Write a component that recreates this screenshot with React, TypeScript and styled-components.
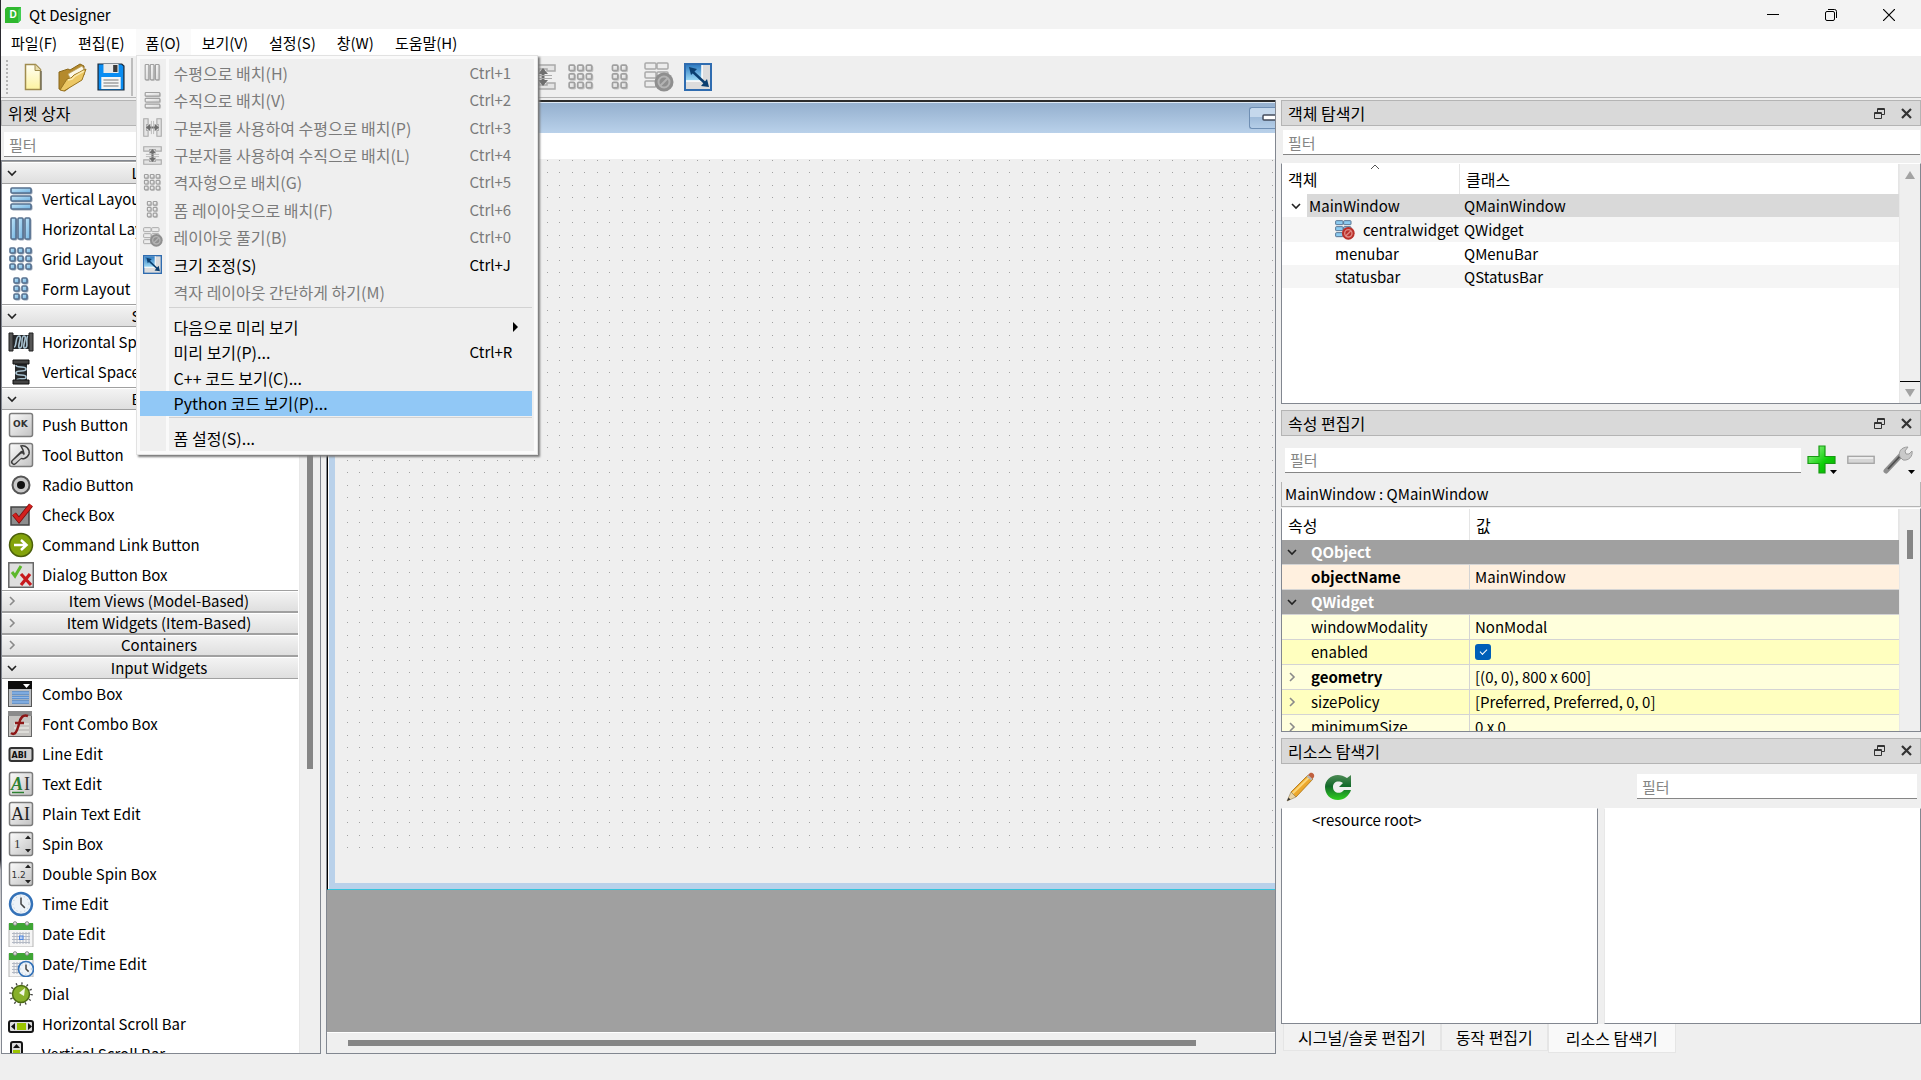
import React, { useState } from "react";
import styled, { createGlobalStyle, css } from "styled-components";
import { Undo2, Redo2, ArrowDown, ArrowUp, MousePointer2, Cable, ListOrdered } from "lucide-react";

const Global = createGlobalStyle`
  *, *::before, *::after { box-sizing: border-box; }
  body { margin: 0; overflow: hidden; }
  body, button, input, table {
    font-family: "Noto Sans CJK KR", "Noto Sans", sans-serif;
    font-size: 15px;
    line-height: 22px;
    color: #000;
  }
`;

const edge = "#828790";

const Window = styled.div`
  height: 100vh;
  display: flex;
  flex-direction: column;
  padding-left: 1px;
  background: linear-gradient(#2a2a30 0 860px, #b8b8bc 870px, #efefef 960px);
`;

/* ---------- title bar ---------- */

const TitleBar = styled.header`
  flex: none;
  height: 29px;
  display: flex;
  align-items: center;
  padding: 0 3px 0 4px;
  background: #f3f3f3;
`;
const Title = styled.h1`
  flex: 1;
  margin: 0 0 0 8px;
  font-size: 15px;
  font-weight: 400;
`;
const CaptionButton = styled.button`
  width: 58px;
  height: 29px;
  padding: 0;
  border: 0;
  background: none;
  display: grid;
  place-items: center;
`;

/* ---------- menu bar ---------- */

const MenuBar = styled.nav`
  flex: none;
  height: 27px;
  display: flex;
  gap: 1px;
  background: #fff;
`;
const MenuSlot = styled.div`
  position: relative;
`;
const MenuTitle = styled.button<{ $open?: boolean }>`
  height: 27px;
  padding: 0 10px;
  border: 0;
  background: ${(p) => (p.$open ? "#fafafa" : "transparent")};
`;
const Popup = styled.div`
  position: absolute;
  z-index: 5;
  top: 26px;
  left: 0;
  width: 402px;
  padding: 3px;
  border: 1px solid #e2e2e2;
  background: linear-gradient(90deg, #efefef 26px, #fafafa 26px 29px, #efefef 29px) content-box, #fafafa;
  box-shadow: 2px 2px 2px #7a7a7a;
`;
const MenuGroup = styled.div<{ $height: number }>`
  height: ${(p) => p.$height}px;
  display: grid;
  grid-auto-rows: 1fr;
`;
const MenuItem = styled.button<{ $active?: boolean }>`
  display: grid;
  grid-template-columns: 26px 1fr 62px;
  column-gap: 8px;
  align-items: center;
  margin-right: 2px;
  padding: 0;
  border: 0;
  text-align: left;
  white-space: nowrap;
  background: ${(p) => (p.$active ? "#91c8f6" : "transparent")};
  &:disabled { color: #7b7b7b; }
`;
const MenuLabel = styled.span`
  font-size: 16px;
`;
const IconCell = styled.span`
  display: grid;
  place-items: center;
`;
const SubArrow = styled.span`
  justify-self: end;
  margin-right: 14px;
  border: 5px solid transparent;
  border-left-color: #000;
  border-right-width: 0;
`;
const MenuRule = styled.hr`
  height: 1px;
  margin: 1px 2px 6px 29px;
  border: 0;
  background: #d2d2d2;
`;

/* ---------- tool bar ---------- */

const ToolBar = styled.div`
  flex: none;
  height: 42px;
  display: flex;
  align-items: center;
  padding: 0 0 4px 5px;
  background: #efefef;
  border-bottom: 1px solid #b4b4b4;
`;
const Grip = styled.span`
  width: 2px;
  height: 34px;
  margin: 4px 5px 0 0;
  background: repeating-linear-gradient(#b5b5b5 0 2px, transparent 2px 4px);
`;
const Divider = styled.span`
  width: 2px;
  height: 38px;
  margin: 4px 4px 0 1px;
  background: #bdbdbd;
`;
const ToolButton = styled.button<{ $wide?: boolean }>`
  width: ${(p) => (p.$wide ? 39 : 38)}px;
  height: 34px;
  margin-top: 4px;
  padding: 0;
  border: 0;
  background: none;
  color: #9a9a9a;
  display: grid;
  place-items: center;
`;

/* ---------- work area ---------- */

const Work = styled.main`
  flex: 1;
  min-height: 0;
  display: grid;
  grid-template-columns: 320px minmax(0, 1fr) 640px;
  column-gap: 5px;
  padding-top: 2px;
  background: #efefef;
`;
const StatusBar = styled.footer`
  flex: none;
  height: 26px;
  background: #efefef;
`;

const Dock = styled.section`
  min-width: 0;
  min-height: 0;
  display: flex;
  flex-direction: column;
`;
const DockHead = styled.div`
  flex: none;
  height: 26px;
  display: flex;
  align-items: center;
  gap: 14px;
  padding: 0 7px 0 6px;
  border: 1px solid #b4b4b4;
  background: #d9d9d9;
`;
const DockTitle = styled.h2`
  flex: 1;
  margin: 0;
  font-size: 16px;
  font-weight: 400;
`;
const SmallButton = styled.button`
  width: 13px;
  height: 13px;
  padding: 0;
  border: 0;
  background: none;
  display: grid;
`;
const Filter = styled.input`
  flex: none;
  height: 25px;
  min-width: 0;
  padding: 0 5px;
  border: 0;
  border-bottom: 1px solid #868686;
  border-radius: 0;
  background: #fff;
  outline: 0;
  &::placeholder { color: #858585; opacity: 1; }
`;

/* ---------- widget box ---------- */

const BoxFilter = styled(Filter)`
  margin: 6px 3px 3px;
`;
const Frame = styled.div`
  flex: 1;
  min-height: 0;
  display: flex;
  border: 1px solid ${edge};
  background: #fff;
`;
const WidgetList = styled.div`
  flex: 1;
  min-width: 0;
  overflow: hidden;
`;
const Category = styled.button<{ $open?: boolean }>`
  width: calc(100% - 1px);
  height: ${(p) => (p.$open ? 23 : 22)}px;
  display: flex;
  align-items: center;
  padding: 0;
  border: 0;
  border-top: 1px solid #a0a0a0;
  border-bottom: 1px solid #a0a0a0;
  box-shadow: inset 0 1px #fff;
  background: linear-gradient(#f4f4f4, #dfdfdf);
`;
const CategoryName = styled.span`
  flex: 1;
  padding-left: 3px;
`;
const Entries = styled.ul`
  margin: 0;
  padding: 0;
  list-style: none;
`;
const Entry = styled.li`
  height: 30px;
  display: flex;
  align-items: center;
  gap: 8px;
  padding-left: 6px;
  white-space: nowrap;
`;
const Track = styled.div`
  flex: none;
  width: 21px;
  background: #efefef;
  border-left: 1px solid #e8e8e8;
  display: flex;
  flex-direction: column;
  align-items: center;
`;
const Thumb = styled.span<{ $from: number; $to: number }>`
  width: 6px;
  margin-top: ${(p) => p.$from}px;
  height: ${(p) => p.$to - p.$from}px;
  background: #868686;
`;
const ArrowGlyph = styled.span<{ $down?: boolean }>`
  margin-top: 7px;
  border: 5px solid transparent;
  ${(p) =>
    p.$down
      ? css`border-bottom: 0; border-top: 8px solid #a3a3a3;`
      : css`border-top: 0; border-bottom: 8px solid #a3a3a3;`}
`;
const TrackEnd = styled.span`
  width: 100%;
  height: 22px;
  margin-top: auto;
  border-top: 1px solid #000;
  display: flex;
  justify-content: center;
  align-items: flex-start;
`;

/* ---------- form canvas ---------- */

const Mdi = styled.section`
  min-width: 0;
  display: flex;
  flex-direction: column;
  border: 1px solid ${edge};
  border-top: 0;
  background: #a0a0a0;
`;
const FormWindow = styled.div`
  flex: 1;
  min-height: 0;
  margin-bottom: 142px;
  display: flex;
  flex-direction: column;
  border-top: 2px solid #2c2c2c;
  border-left: 1px solid #000;
  border-bottom: 1px solid #35c4dc;
`;
const FormTitle = styled.div`
  flex: none;
  height: 31px;
  display: flex;
  justify-content: flex-end;
  align-items: center;
  border-left: 1px solid #fff;
  border-top: 1px solid #dfeaf5;
  background: linear-gradient(#98b3d1 10%, #b9d1ea);
  overflow: hidden;
`;
const FormMinimize = styled.button`
  width: 26px;
  height: 22px;
  padding: 0;
  border: 1px solid #6f8fb4;
  border-right: 0;
  border-radius: 3px 0 0 3px;
  background: linear-gradient(#c5d8ec 45%, #9fbbd9 45%, #b4cde7);
  display: flex;
  justify-content: flex-end;
  align-items: center;
`;
const FormBody = styled.div`
  flex: 1;
  min-height: 0;
  display: flex;
  flex-direction: column;
  padding-bottom: 34px;
  border: solid #b9d1ea;
  border-width: 0 0 6px 6px;
  box-shadow: -1px 0 #fff;
  margin-left: 1px;
  background: #efefef;
`;
const FormMenu = styled.div`
  flex: none;
  height: 26px;
  background: #fff;
`;
const DotGrid = styled.svg`
  flex: 1;
  width: 100%;
  min-height: 0;
  display: block;
`;
const HScroll = styled.div`
  flex: none;
  height: 21px;
  padding: 7px 79px 0 21px;
  border-top: 1px solid #fff;
  background: #efefef;
`;
const HThumb = styled.div`
  height: 6px;
  background: #868686;
`;

/* ---------- right column ---------- */

const RightColumn = styled.div`
  min-height: 0;
  display: grid;
  grid-template-rows: 304fr 321fr 316fr;
  row-gap: 6px;
`;
const TreeFilter = styled(Filter)`
  margin: 4px 1px 8px 2px;
`;
const TableFrame = styled.div`
  flex: 1;
  min-height: 0;
  display: flex;
  overflow: hidden;
  border: 1px solid ${edge};
  border-top-color: #fff;
  background: #fff;
`;
const TableClip = styled.div`
  flex: 1;
  min-width: 0;
  overflow: hidden;
`;
const Table = styled.table`
  width: 100%;
  table-layout: fixed;
  border-spacing: 0;
  white-space: nowrap;
  th, td {
    padding: 0;
    text-align: left;
    font-weight: 400;
    line-height: 22px;
  }
`;
const Col = styled.col<{ $width: number }>`
  width: ${(p) => p.$width}px;
`;
const HeadRow = styled.tr<{ $tall?: boolean }>`
  height: ${(p) => (p.$tall ? 31 : 30)}px;
  th {
    padding-left: 6px;
    border-right: 1px solid #e5e5e5;
    font-size: 16px;
  }
`;
const HeadLabel = styled.div`
  position: relative;
`;
const SortMark = styled.svg`
  position: absolute;
  top: -4px;
  left: 48%;
`;
const TreeRow = styled.tr<{ $alt?: boolean; $selected?: boolean; $tall?: boolean }>`
  height: ${(p) => (p.$tall ? 25 : 23)}px;
  background: ${(p) => (p.$selected ? "linear-gradient(90deg, #fff 25px, #d9d9d9 25px)" : p.$alt ? "#f5f5f5" : "#fff")};
  td { padding-left: 4px; }
`;
const NameCell = styled.div<{ $indent: number }>`
  height: 22px;
  display: flex;
  align-items: center;
  gap: 8px;
  padding-left: ${(p) => p.$indent}px;
`;
const GroupRow = styled.tr`
  height: 25px;
  background: #a0a0a0;
  th {
    color: #fff;
    font-weight: 700;
    border-bottom: 1px solid #d4d4d4;
  }
`;
const PropRow = styled.tr<{ $tone: string; $bold?: boolean }>`
  height: 25px;
  background: ${(p) => p.$tone};
  th, td { border-bottom: 1px solid #d4d4d4; }
  th {
    border-right: 1px solid #d4d4d4;
    ${(p) => p.$bold && css`font-weight: 700;`}
  }
  td { padding-left: 5px; }
`;
const PropName = styled.div`
  height: 22px;
  display: grid;
  grid-template-columns: 29px 1fr;
  align-items: center;
`;
const ChevronSlot = styled.span`
  padding-left: 5px;
  display: grid;
`;
const CheckLabel = styled.label`
  display: flex;
`;
const Check = styled.input`
  appearance: none;
  width: 16px;
  height: 16px;
  margin: 0;
  border-radius: 3px;
  background: #005fb8;
  display: grid;
  place-items: center;
  &:checked::after {
    content: "";
    width: 7px;
    height: 4px;
    border: solid #fff;
    border-width: 0 0 1px 1px;
    rotate: -45deg;
    translate: 0 -1px;
  }
`;
const PropTools = styled.div`
  flex: none;
  height: 46px;
  display: flex;
  align-items: center;
  padding: 2px 3px 0 4px;
`;
const PropFilter = styled(Filter)`
  flex: 1;
  margin-right: 3px;
`;
const PropButton = styled.button`
  width: 38px;
  height: 34px;
  padding: 0;
  border: 0;
  background: none;
  display: grid;
  place-items: center;
`;
const ObjectLabel = styled.p`
  flex: none;
  height: 25px;
  margin: 0 0 1px;
  padding: 1px 3px;
  border: 1px solid #b4b4b4;
  border-top: 0;
`;
const ResourceTools = styled.div`
  flex: none;
  height: 44px;
  display: flex;
  align-items: center;
  padding: 2px 4px 0 1px;
`;
const ResourceButton = styled.button`
  width: 37px;
  height: 34px;
  padding: 0;
  border: 0;
  background: none;
  display: grid;
  place-items: center;
`;
const ResourceFilter = styled(Filter)`
  width: 280px;
  margin-left: auto;
`;
const Panes = styled.div`
  flex: 1;
  min-height: 0;
  display: grid;
  grid-template-columns: 317px 1fr;
  column-gap: 6px;
`;
const Pane = styled.div<{ $soft?: boolean }>`
  border: 1px solid ${edge};
  border-top-color: #fff;
  ${(p) => p.$soft && css`border-left-color: #e8e8e8;`}
  background: #fff;
  padding: 0 30px;
`;
const Tabs = styled.div`
  flex: none;
  height: 30px;
  display: flex;
  align-items: flex-start;
  padding-left: 2px;
`;
const Tab = styled.button<{ $current?: boolean }>`
  height: ${(p) => (p.$current ? 29 : 27)}px;
  padding: ${(p) => (p.$current ? "0 17px" : "0 14px")};
  border: 1px solid #e5e5e5;
  border-top: 0;
  background: ${(p) => (p.$current ? "#f9f9f9" : "#f2f2f2")};
  font-size: 16px;
  white-space: nowrap;
`;

/* ---------- drawings ---------- */

const Chevron = ({ open, dim }: { open?: boolean; dim?: boolean }) => (
  <svg width="10" height="10" viewBox="0 0 10 10" fill="none" stroke={dim ? "#8a8a8a" : "#222"} strokeWidth="1.6">
    <path d={open ? "M1 3l4 4 4-4" : "M3 1l4 4-4 4"} />
  </svg>
);

type Tone = { gray?: boolean; size?: number };
const Cells = ({ rects, gray, size = 26 }: Tone & { rects: number[][] }) => (
  <svg width={size} height={size} viewBox="0 0 26 26">
    <defs>
      <linearGradient id={gray ? "cg" : "cb"} x1="0" y1="0" x2="1" y2="1">
        <stop offset="0" stopColor={gray ? "#fafafa" : "#c4e6f9"} />
        <stop offset="1" stopColor={gray ? "#d4d4d4" : "#6fb2e0"} />
      </linearGradient>
    </defs>
    {rects.map(([x, y, w, h], i) => (
      <g key={i}>
        <rect x={x + 1} y={y + 1} width={w} height={h} rx="1" fill={gray ? "#bdbdbd" : "#8b9cb0"} stroke={gray ? "#c8c8c8" : "#9aa6b6"} />
        <rect x={x} y={y} width={w} height={h} rx="1" fill={`url(#${gray ? "cg" : "cb"})`} stroke={gray ? "#a0a0a0" : "#56708f"} strokeWidth="1.6" />
      </g>
    ))}
  </svg>
);
const grid = (xs: number[], ys: number[]) => ys.flatMap((y) => xs.map((x) => [x, y, 5, 5]));
const VBox = (p: Tone) => <Cells {...p} rects={[[3, 2, 20, 5], [3, 10, 20, 5], [3, 18, 20, 5]]} />;
const HBox = (p: Tone) => <Cells {...p} rects={[[3, 2, 5, 21], [10, 2, 5, 21], [17, 2, 5, 21]]} />;
const GridBox = (p: Tone) => <Cells {...p} rects={grid([2, 10, 18], [2, 10, 18])} />;
const FormBox = (p: Tone) => <Cells {...p} rects={grid([6, 14], [2, 10, 18])} />;

const SplitBox = ({ vertical, size = 26 }: { vertical?: boolean; size?: number }) => (
  <svg width={size} height={size} viewBox="0 0 26 26">
    <g transform={vertical ? "rotate(90 13 13)" : undefined}>
      <path d="M1 1h6v8H5v8h2v8H1zM25 1h-6v8h2v8h-2v8h6z" fill="#e4e4e4" stroke="#a9a9a9" strokeWidth="1.5" />
      <path d="M4 13l6-5v3.500h6V8l6 5-6 5v-3.500h-6V18z" fill="#6e6e6e" />
      <path d="M11.500 4v18M14.500 4v18" stroke="#a9a9a9" />
    </g>
  </svg>
);
const BreakBox = ({ red, size = 30 }: { red?: boolean; size?: number }) => (
  <svg width={size} height={size} viewBox="0 0 30 30">
    {[1, 10, 19].map((y) =>
      [1, 13].map((x) => (
        <rect key={`${x}${y}`} x={x} y={y} width="11" height="6" rx="1" fill={red ? "#8ccbf0" : "#ececec"} stroke={red ? "#577492" : "#a9a9a9"} strokeWidth="1.500" />
      ))
    )}
    <circle cx="20" cy="20" r="9.500" fill={red ? "#b9302a" : "#8f8f8f"} />
    <circle cx="20" cy="20" r="5.500" fill="none" stroke={red ? "#e08a85" : "#b3b3b3"} strokeWidth="2" />
    <path d="M16 24l8-8" stroke={red ? "#e08a85" : "#b3b3b3"} strokeWidth="2" />
  </svg>
);
const AdjustIcon = ({ size = 28 }: { size?: number }) => (
  <svg width={size} height={size} viewBox="0 0 28 28">
    <defs>
      <linearGradient id="adj" x1="0" y1="0" x2="0" y2="1">
        <stop offset="0" stopColor="#2f7cc2" />
        <stop offset="1" stopColor="#9fdcf6" />
      </linearGradient>
    </defs>
    <rect x="1" y="1" width="26" height="26" fill="#dcdcdc" stroke="#2f6cb0" strokeWidth="2" />
    <rect x="2" y="2" width="16" height="16" fill="url(#adj)" />
    <path d="M18 2v16H2" fill="none" stroke="#fff" strokeWidth="1.500" />
    <path d="M8 8l14 13" stroke="#0b3f70" strokeWidth="2.500" />
    <path d="M5 4l8 2-6 6zM25 24l-8-1 6-7z" fill="#0b3f70" />
  </svg>
);
const NewIcon = () => (
  <svg width="18" height="28" viewBox="0 0 18 28">
    <defs>
      <linearGradient id="nw" x1="0" y1="0" x2="0" y2="1">
        <stop offset="0" stopColor="#fffef4" />
        <stop offset="1" stopColor="#fdf3a0" />
      </linearGradient>
    </defs>
    <path d="M1.500 1.500h10l5 5v20h-15z" fill="url(#nw)" stroke="#a08c4e" strokeWidth="1.500" />
    <path d="M11 1.500v6h6" fill="#e8dca8" stroke="#a08c4e" />
    <path d="M17 8v19" stroke="#77705a" strokeWidth="1.500" />
  </svg>
);
const OpenIcon = () => (
  <svg width="30" height="30" viewBox="0 0 30 30">
    <path d="M2 10l9-3 2 1 10-6 4 2v9L8 29l-6-2z" fill="#b58a2c" stroke="#8a6718" />
    <path d="M11 12L25 4l2 3-13 11z" fill="#fbf7e6" stroke="#b9a060" strokeWidth=".8" />
    <path d="M3 28l7-11 4-1 3-3L29 7l-4 11L7 29z" fill="#ecc764" stroke="#9a7420" />
    <path d="M11 18l4-1 3-3 9-5" fill="none" stroke="#fbe9ab" strokeWidth="1.500" />
  </svg>
);
const SaveIcon = () => (
  <svg width="28" height="28" viewBox="0 0 26 28" preserveAspectRatio="none">
    <path d="M1 1h22l2 2v24H1z" fill="#0a8df2" stroke="#1d2c3c" strokeWidth="1.200" />
    <path d="M6 1h14v9H6z" fill="#e9e9e9" />
    <path d="M15 2h4v7h-4z" fill="#3a3a3a" />
    <path d="M4 14h18v12H4z" fill="#f6f6f6" />
    <path d="M6 17h14M6 20h14M6 23h14" stroke="#777" strokeWidth="1.200" />
  </svg>
);
const PlusIcon = () => (
  <svg width="34" height="30" viewBox="0 0 34 30">
    <defs>
      <linearGradient id="pl" x1="0" y1="0" x2="1" y2="1">
        <stop offset="0" stopColor="#a5f79a" />
        <stop offset=".6" stopColor="#0ccf06" />
        <stop offset="1" stopColor="#0ba806" />
      </linearGradient>
    </defs>
    <path d="M13 1h6v10.500h10v7H19V28h-6v-9.500H2v-7h11z" fill="url(#pl)" stroke="#179a12" strokeWidth="1.200" />
    <path d="M24 25h7l-3.500 4z" fill="#000" />
  </svg>
);
const MinusIcon = () => (
  <svg width="28" height="10" viewBox="0 0 28 10">
    <rect x=".8" y="1.300" width="26.400" height="7" fill="#d6d6d6" stroke="#a4a4a4" strokeWidth="1.300" />
    <path d="M2 3h24" stroke="#f3f3f3" strokeWidth="1.500" />
  </svg>
);
const WrenchIcon = () => (
  <svg width="32" height="30" viewBox="0 0 32 30">
    <path d="M3 26L19 9" stroke="#8e8e8e" strokeWidth="5" strokeLinecap="round" />
    <path d="M5 24L18 10" stroke="#4e4e4e" strokeWidth="1.800" />
    <path d="M17 12c-2-5 1-10 8-10l-3 4 1 3 3 0 3-3c1 5-3 10-9 9z" fill="#c9c9c9" stroke="#9d9d9d" />
    <path d="M25 25h7l-3.500 4z" fill="#000" />
  </svg>
);
const PencilIcon = () => (
  <svg width="30" height="30" viewBox="0 0 30 30">
    <path d="M5 20L22 3l5 4L10 25z" fill="#eda82c" stroke="#a86f10" strokeWidth=".8" />
    <path d="M6.500 21.500L24 4.500" stroke="#fbd679" strokeWidth="2" />
    <path d="M22 3l2-2c2-1 5 1 4 4l-1.500 2z" fill="#c0603f" />
    <path d="M20.500 4.500L22 3l4.700 4-1.500 1.500z" fill="#b5b5b5" />
    <path d="M5 20L1 29l9-4z" fill="#e9d3a4" stroke="#8e7a50" strokeWidth=".6" />
    <path d="M1 29l1.500-3.500 2 2z" fill="#333" />
  </svg>
);
const ReloadIcon = () => (
  <svg width="28" height="28" viewBox="0 0 28 28">
    <defs>
      <linearGradient id="rl" x1="0" y1="0" x2="0" y2="1">
        <stop offset="0" stopColor="#4d8a55" />
        <stop offset=".45" stopColor="#12692a" />
        <stop offset="1" stopColor="#2fd01f" />
      </linearGradient>
    </defs>
    <path d="M27 2v12H15l4-4c-5-3-10-1-10 4 0 6 7 8 11 3l7 0c-2 6-7 10-13 10C6 27 1 21 1 14 1 4 13-2 23 5z" fill="url(#rl)" />
  </svg>
);
const FloatIcon = () => (
  <svg width="13" height="13" viewBox="0 0 13 13" fill="none" stroke="#333">
    <path d="M4.500 5V1.500h7v6H9M4 2.500h8" />
    <path d="M1.500 5.500h7v6h-7zM1 6.500h8" />
  </svg>
);
const CloseIcon = () => (
  <svg width="13" height="13" viewBox="0 0 13 13">
    <path d="M2 2l9 9M11 2l-9 9" stroke="#333" strokeWidth="2.200" />
  </svg>
);
const AppIcon = () => (
  <svg width="16" height="16" viewBox="0 0 16 16">
    <path d="M2 0h14v13l-3 3H0V2z" fill="#2fb82f" />
    <path d="M16 0v13l-3 3V3z" fill="#41cd52" />
    <text x="4.500" y="11" fontSize="10" fontWeight="700" fill="#fff" fontFamily="Liberation Sans, sans-serif">D</text>
  </svg>
);

const Tile = ({ children }: { children?: React.ReactNode }) => (
  <g>
    <rect x="1.500" y="1.500" width="23" height="23" rx="2" fill="url(#tile)" stroke="#7c7c7c" strokeWidth="1.500" />
    {children}
  </g>
);
const Clock = ({ x = 13, y = 13, r = 11 }) => (
  <g>
    <circle cx={x} cy={y} r={r} fill="#eef3f8" stroke="#3472b8" strokeWidth={r / 4.5} />
    <circle cx={x} cy={y} r={r * 0.72} fill="none" stroke="#b9c6d2" strokeDasharray="1 3" />
    <path d={`M${x} ${y - r * 0.6}V${y}l${r * 0.35} ${r * 0.35}`} fill="none" stroke="#444" strokeWidth="1.500" />
  </g>
);
const Calendar = () => (
  <g>
    <rect x="1" y="3" width="24" height="23" fill="#f5f5f5" stroke="#b5b5b5" />
    <path d="M1 2h24v7H1z" fill="#3fa535" />
    <path d="M4 12.500h18M4 15.500h18M4 18.500h18M4 21.500h18M6 11v12M9 11v12M12 11v12M15 11v12M18 11v12M21 11v12" stroke="#b3b9c4" />
    <circle cx="7" cy="2.500" r="1.800" fill="#ddd" stroke="#888" />
    <circle cx="19" cy="2.500" r="1.800" fill="#ddd" stroke="#888" />
  </g>
);
const letter = { fontFamily: "Liberation Serif, serif", fontSize: 18 };
const art: Record<string, React.ReactNode> = {
  hspace: (
    <g>
      <path d="M5 6h16v14H5z" fill="#26292c" />
      <path d="M6 18C9 18 7 7 11 7S8 19 12 19 12 7 16 7s-3 12 1 12S17 9 20 7" fill="none" stroke="#a9c3d2" strokeWidth="1.600" />
      <path d="M1 4h4v18H1zM21 4h4v18h-4z" fill="#555" stroke="#222" />
    </g>
  ),
  vspace: (
    <g>
      <path d="M7 4h12v18H7z" fill="#26292c" />
      <path d="M8 6c0 4 10 0 10 4S8 10 8 14s10 0 10 4-8 0-9 3" fill="none" stroke="#a9c3d2" strokeWidth="1.600" />
      <path d="M5 1h16v4H5zM5 21h16v4H5z" fill="#444" stroke="#111" />
    </g>
  ),
  push: <Tile><text x="5" y="15" fontSize="9" fontWeight="700" fill="#333" fontFamily="DejaVu Sans, sans-serif">OK</text></Tile>,
  tool: (
    <Tile>
      <path d="M6 20l8-8" stroke="#3c3c3c" strokeWidth="6" strokeLinecap="round" />
      <path d="M13 4c5-1 9 3 8 8-2 5-7 6-10 3l5-3-1-4z" fill="#ddd" stroke="#3c3c3c" strokeWidth="1.500" />
      <path d="M6 20l8-7" stroke="#d5d5d5" strokeWidth="3" strokeLinecap="round" />
    </Tile>
  ),
  radio: (
    <g>
      <circle cx="13" cy="13" r="8.500" fill="#c9c9c9" stroke="#555" strokeWidth="2" />
      <circle cx="13" cy="13" r="4" fill="#111" />
    </g>
  ),
  check: (
    <g>
      <rect x="3" y="5" width="18" height="18" fill="#8d8d8d" stroke="#444" strokeWidth="1.500" />
      <path d="M6 12l5 6L23 3" fill="none" stroke="#7a0d0d" strokeWidth="5" />
      <path d="M6 12l5 6L23 3" fill="none" stroke="#d3201d" strokeWidth="3.500" />
    </g>
  ),
  link: (
    <g>
      <circle cx="13" cy="13" r="11.500" fill="#83a30b" stroke="#4b5f0b" strokeWidth="1.500" />
      <path d="M6 13h12M13 8l5.500 5-5.500 5" fill="none" stroke="#fff" strokeWidth="2.500" />
    </g>
  ),
  dialog: (
    <g>
      <rect x=".8" y=".8" width="24.500" height="24.500" fill="#dedede" stroke="#666" strokeWidth="1.500" />
      <path d="M4 10l3 4 6-10" fill="none" stroke="#5cb82b" strokeWidth="3" />
      <path d="M13 12l10 11M22 12l-9 11" stroke="#c7191d" strokeWidth="3.200" />
    </g>
  ),
  combo: (
    <g>
      <rect x=".5" y=".5" width="23" height="25" fill="#b9bcc0" stroke="#555" />
      <path d="M0 0h24v8H0z" fill="#0c0c0c" />
      <path d="M15 3h7l-3.500 4z" fill="#fff" />
      <path d="M4 12h17M4 16.500h17M4 21h17" stroke="#4f86c8" strokeWidth="3.500" />
      <path d="M4 12h17M4 16.500h17M4 21h17" stroke="#8fb8e8" strokeWidth="1.500" />
    </g>
  ),
  font: (
    <g>
      <rect x=".5" y=".5" width="23" height="25" fill="#c6c4c1" stroke="#666" />
      <path d="M0 0h24v5H0z" fill="#8b8b8b" />
      <path d="M6 13h15M6 17h15M6 21h15" stroke="#e5e3e0" strokeWidth="1.500" />
      <path d="M3 22c4 3 6-2 8-9 1-6 4-10 9-8M7 12h9" fill="none" stroke="#8d1717" strokeWidth="2.500" />
    </g>
  ),
  line: (
    <g>
      <rect x="1.500" y="7" width="23" height="13" rx="2" fill="#d0d0d0" stroke="#333" strokeWidth="2" />
      <text x="3.500" y="17" fontSize="8" fontWeight="700" fill="#111" fontFamily="DejaVu Sans, sans-serif">ABI</text>
    </g>
  ),
  text: (
    <Tile>
      <text x="3" y="19" {...letter} fontStyle="italic" fontWeight="700" fill="#2c8032">A</text>
      <text x="16" y="19" {...letter} fill="#333">I</text>
      <path d="M4 21.500h12" stroke="#2c8032" strokeWidth="1.500" />
    </Tile>
  ),
  plain: <Tile><text x="3" y="19" {...letter} fill="#222">AI</text></Tile>,
  spin: (
    <Tile>
      <text x="6" y="17" {...letter} fontSize={13} fill="#333">1</text>
      <path d="M17 8h6l-3-3.500zM17 18h6l-3 3.500z" fill="#222" />
    </Tile>
  ),
  dspin: (
    <Tile>
      <text x="3.500" y="17" fontSize="9" fill="#333" fontFamily="DejaVu Sans, sans-serif">1.2</text>
      <path d="M17 7h6l-3-3.500zM17 19h6l-3 3.500z" fill="#222" />
    </Tile>
  ),
  time: <Clock />,
  date: <g><Calendar /><rect x="11.500" y="15" width="3.500" height="3.500" fill="#bcd2f5" stroke="#4e86e0" /></g>,
  datetime: <g><Calendar /><Clock x={18} y={18} r={7.5} /></g>,
  dial: (
    <g>
      <circle cx="13" cy="13" r="10.500" fill="none" stroke="#444" strokeWidth="2.500" strokeDasharray="1.300 4.200" />
      <circle cx="13" cy="13" r="8.500" fill="#87b02a" stroke="#4b6a12" strokeWidth="1.500" />
      <path d="M17 7l-1 8-5-3z" fill="#f2f7e4" />
    </g>
  ),
  hscroll: (
    <g>
      <rect x="1" y="10" width="24" height="11" rx="2" fill="#ddd" stroke="#151515" strokeWidth="2" />
      <path d="M9 12h9v7H9z" fill="#9bc400" />
      <path d="M7 12v7l-4-3.500zM20 12v7l4-3.500z" fill="#111" />
    </g>
  ),
  vscroll: (
    <g>
      <rect x="3" y="1" width="11" height="25" rx="2" fill="#ddd" stroke="#151515" strokeWidth="2" />
      <path d="M5 9h7v9H5z" fill="#9bc400" />
      <path d="M5 7h7L8.500 3z" fill="#111" />
    </g>
  ),
};
const WidgetIcon = ({ name }: { name: string }) => {
  if (name === "vbox") return <VBox />;
  if (name === "hbox") return <HBox />;
  if (name === "grid") return <GridBox />;
  if (name === "form") return <FormBox />;
  return (
    <svg width="26" height="26" viewBox="0 0 26 26">
      <defs>
        <linearGradient id="tile" x1="0" y1="0" x2="1" y2="1">
          <stop offset="0" stopColor="#fbfbfb" />
          <stop offset="1" stopColor="#c2c2c2" />
        </linearGradient>
      </defs>
      {art[name]}
    </svg>
  );
};

/* ---------- data ---------- */

const layoutMenu: { label: string; keys?: string; icon?: React.ReactNode; on?: boolean }[] = [
  { label: "수평으로 배치(H)", keys: "Ctrl+1", icon: <HBox gray size={19} /> },
  { label: "수직으로 배치(V)", keys: "Ctrl+2", icon: <VBox gray size={19} /> },
  { label: "구분자를 사용하여 수평으로 배치(P)", keys: "Ctrl+3", icon: <SplitBox size={19} /> },
  { label: "구분자를 사용하여 수직으로 배치(L)", keys: "Ctrl+4", icon: <SplitBox vertical size={19} /> },
  { label: "격자형으로 배치(G)", keys: "Ctrl+5", icon: <GridBox gray size={19} /> },
  { label: "폼 레이아웃으로 배치(F)", keys: "Ctrl+6", icon: <FormBox gray size={19} /> },
  { label: "레이아웃 풀기(B)", keys: "Ctrl+0", icon: <BreakBox size={20} /> },
  { label: "크기 조정(S)", keys: "Ctrl+J", icon: <AdjustIcon size={19} />, on: true },
  { label: "격자 레이아웃 간단하게 하기(M)" },
];
const categories: { name: string; open?: boolean; items?: [string, string][] }[] = [
  { name: "Layouts", open: true, items: [["vbox", "Vertical Layout"], ["hbox", "Horizontal Layout"], ["grid", "Grid Layout"], ["form", "Form Layout"]] },
  { name: "Spacers", open: true, items: [["hspace", "Horizontal Spacer"], ["vspace", "Vertical Spacer"]] },
  {
    name: "Buttons",
    open: true,
    items: [["push", "Push Button"], ["tool", "Tool Button"], ["radio", "Radio Button"], ["check", "Check Box"], ["link", "Command Link Button"], ["dialog", "Dialog Button Box"]],
  },
  { name: "Item Views (Model-Based)" },
  { name: "Item Widgets (Item-Based)" },
  { name: "Containers" },
  {
    name: "Input Widgets",
    open: true,
    items: [
      ["combo", "Combo Box"], ["font", "Font Combo Box"], ["line", "Line Edit"], ["text", "Text Edit"], ["plain", "Plain Text Edit"],
      ["spin", "Spin Box"], ["dspin", "Double Spin Box"], ["time", "Time Edit"], ["date", "Date Edit"], ["datetime", "Date/Time Edit"],
      ["dial", "Dial"], ["hscroll", "Horizontal Scroll Bar"], ["vscroll", "Vertical Scroll Bar"],
    ],
  },
];
const cream = "#ffffdc";
const lemon = "#ffffbf";

const DockHeader = ({ title }: { title: string }) => (
  <DockHead>
    <DockTitle>{title}</DockTitle>
    <SmallButton aria-label="Float"><FloatIcon /></SmallButton>
    <SmallButton aria-label="Close"><CloseIcon /></SmallButton>
  </DockHead>
);

const FormMenuPopup = () => (
  <Popup role="menu">
    <MenuGroup $height={247}>
      {layoutMenu.map((m) => (
        <MenuItem key={m.label} role="menuitem" disabled={!m.on}>
          <IconCell>{m.icon}</IconCell>
          <MenuLabel>{m.label}</MenuLabel>
          <span>{m.keys}</span>
        </MenuItem>
      ))}
    </MenuGroup>
    <MenuRule />
    <MenuGroup $height={102}>
      <MenuItem role="menuitem"><IconCell /><MenuLabel>다음으로 미리 보기</MenuLabel><SubArrow /></MenuItem>
      <MenuItem role="menuitem"><IconCell /><MenuLabel>미리 보기(P)...</MenuLabel><span>Ctrl+R</span></MenuItem>
      <MenuItem role="menuitem"><IconCell /><MenuLabel>C++ 코드 보기(C)...</MenuLabel></MenuItem>
      <MenuItem role="menuitem" $active><IconCell /><MenuLabel>Python 코드 보기(P)...</MenuLabel></MenuItem>
    </MenuGroup>
    <MenuRule />
    <MenuGroup $height={27}>
      <MenuItem role="menuitem"><IconCell /><MenuLabel>폼 설정(S)...</MenuLabel></MenuItem>
    </MenuGroup>
  </Popup>
);

export default function App() {
  const [enabled, setEnabled] = useState(true);
  return (
    <Window>
      <Global />
      <TitleBar>
        <AppIcon />
        <Title>Qt Designer</Title>
        <CaptionButton aria-label="Minimize">
          <svg width="12" height="12"><path d="M0 5.500h12" stroke="#000" /></svg>
        </CaptionButton>
        <CaptionButton aria-label="Restore">
          <svg width="12" height="12" fill="none" stroke="#000">
            <rect x=".5" y="2.500" width="9" height="9" rx="1.500" />
            <path d="M3 .5h6.500a2 2 0 0 1 2 2V9" />
          </svg>
        </CaptionButton>
        <CaptionButton aria-label="Close window">
          <svg width="12" height="12"><path d="M0 0l12 12M12 0L0 12" stroke="#000" strokeWidth="1.200" /></svg>
        </CaptionButton>
      </TitleBar>

      <MenuBar>
        <MenuTitle>파일(F)</MenuTitle>
        <MenuTitle>편집(E)</MenuTitle>
        <MenuSlot>
          <MenuTitle $open>폼(O)</MenuTitle>
          <FormMenuPopup />
        </MenuSlot>
        <MenuTitle>보기(V)</MenuTitle>
        <MenuTitle>설정(S)</MenuTitle>
        <MenuTitle>창(W)</MenuTitle>
        <MenuTitle>도움말(H)</MenuTitle>
      </MenuBar>

      <ToolBar>
        <Grip />
        <ToolButton $wide aria-label="New"><NewIcon /></ToolButton>
        <ToolButton $wide aria-label="Open"><OpenIcon /></ToolButton>
        <ToolButton $wide aria-label="Save"><SaveIcon /></ToolButton>
        <Divider />
        <ToolButton aria-label="Undo"><Undo2 /></ToolButton>
        <ToolButton aria-label="Redo"><Redo2 /></ToolButton>
        <ToolButton aria-label="Send to back"><ArrowDown /></ToolButton>
        <ToolButton aria-label="Bring to front"><ArrowUp /></ToolButton>
        <Divider />
        <ToolButton aria-label="Edit widgets"><MousePointer2 /></ToolButton>
        <ToolButton aria-label="Edit signals"><Cable /></ToolButton>
        <ToolButton aria-label="Edit tab order"><ListOrdered /></ToolButton>
        <ToolButton aria-label="Lay out horizontally"><HBox gray /></ToolButton>
        <ToolButton aria-label="Lay out vertically"><VBox gray /></ToolButton>
        <ToolButton aria-label="Horizontal splitter"><SplitBox /></ToolButton>
        <ToolButton aria-label="Vertical splitter"><SplitBox vertical /></ToolButton>
        <ToolButton aria-label="Lay out in a grid"><GridBox gray size={28} /></ToolButton>
        <ToolButton $wide aria-label="Lay out in a form"><FormBox gray size={28} /></ToolButton>
        <ToolButton $wide aria-label="Break layout"><BreakBox /></ToolButton>
        <ToolButton $wide aria-label="Adjust size"><AdjustIcon /></ToolButton>
      </ToolBar>

      <Work>
        <Dock>
          <DockHeader title="위젯 상자" />
          <BoxFilter placeholder="필터" aria-label="위젯 상자 필터" />
          <Frame>
            <WidgetList>
              {categories.map((c) => (
                <div key={c.name}>
                  <Category $open={c.open}>
                    <ChevronSlot><Chevron open={c.open} dim={!c.open} /></ChevronSlot>
                    <CategoryName>{c.name}</CategoryName>
                  </Category>
                  {c.items && (
                    <Entries>
                      {c.items.map(([icon, label]) => (
                        <Entry key={label}><WidgetIcon name={icon} />{label}</Entry>
                      ))}
                    </Entries>
                  )}
                </div>
              ))}
            </WidgetList>
            <Track><Thumb $from={40} $to={608} /></Track>
          </Frame>
        </Dock>

        <Mdi>
          <FormWindow>
            <FormTitle>
              <FormMinimize aria-label="Minimize form">
                <svg width="13" height="8"><rect x="1" y="1" width="14" height="5" rx="1" fill="#fff" stroke="#444c5c" strokeWidth="1.500" /></svg>
              </FormMinimize>
            </FormTitle>
            <FormBody>
              <FormMenu />
              <DotGrid>
                <defs>
                  <pattern id="dots" width="25" height="25" patternUnits="userSpaceOnUse">
                    <path d="M12 1h1v1h-1zM24 1h1v1h-1zM12 13h1v1h-1zM24 13h1v1h-1z" fill="#a0a0a0" shapeRendering="crispEdges" />
                  </pattern>
                </defs>
                <rect width="100%" height="100%" fill="url(#dots)" />
              </DotGrid>
            </FormBody>
          </FormWindow>
          <HScroll><HThumb /></HScroll>
        </Mdi>

        <RightColumn>
          <Dock>
            <DockHeader title="객체 탐색기" />
            <TreeFilter placeholder="필터" aria-label="객체 필터" />
            <TableFrame>
              <TableClip>
                <Table>
                  <colgroup><Col $width={178} /><col /></colgroup>
                  <thead>
                    <HeadRow>
                      <th>
                        <HeadLabel>
                          객체
                          <SortMark width="10" height="6" fill="none" stroke="#555"><path d="M1 5l4-4 4 4" /></SortMark>
                        </HeadLabel>
                      </th>
                      <th>클래스</th>
                    </HeadRow>
                  </thead>
                  <tbody>
                    <TreeRow $selected>
                      <td><NameCell $indent={5}><Chevron open />MainWindow</NameCell></td>
                      <td>QMainWindow</td>
                    </TreeRow>
                    <TreeRow $alt $tall>
                      <td><NameCell $indent={49}><BreakBox red size={20} />centralwidget</NameCell></td>
                      <td>QWidget</td>
                    </TreeRow>
                    <TreeRow>
                      <td><NameCell $indent={49}>menubar</NameCell></td>
                      <td>QMenuBar</td>
                    </TreeRow>
                    <TreeRow $alt>
                      <td><NameCell $indent={49}>statusbar</NameCell></td>
                      <td>QStatusBar</td>
                    </TreeRow>
                  </tbody>
                </Table>
              </TableClip>
              <Track>
                <ArrowGlyph />
                <TrackEnd><ArrowGlyph $down /></TrackEnd>
              </Track>
            </TableFrame>
          </Dock>

          <Dock>
            <DockHeader title="속성 편집기" />
            <PropTools>
              <PropFilter placeholder="필터" aria-label="속성 필터" />
              <PropButton aria-label="Add property"><PlusIcon /></PropButton>
              <PropButton aria-label="Remove property"><MinusIcon /></PropButton>
              <PropButton aria-label="Configure"><WrenchIcon /></PropButton>
            </PropTools>
            <ObjectLabel>MainWindow : QMainWindow</ObjectLabel>
            <TableFrame>
              <TableClip>
                <Table>
                  <colgroup><Col $width={188} /><col /></colgroup>
                  <thead><HeadRow $tall><th>속성</th><th>값</th></HeadRow></thead>
                  <tbody>
                    <GroupRow><th colSpan={2}><PropName><ChevronSlot><Chevron open /></ChevronSlot>QObject</PropName></th></GroupRow>
                    <PropRow $tone="#fff0df" $bold><th><PropName><span />objectName</PropName></th><td>MainWindow</td></PropRow>
                    <GroupRow><th colSpan={2}><PropName><ChevronSlot><Chevron open /></ChevronSlot>QWidget</PropName></th></GroupRow>
                    <PropRow $tone={cream}><th><PropName><span />windowModality</PropName></th><td>NonModal</td></PropRow>
                    <PropRow $tone={lemon}>
                      <th><PropName><span /><label htmlFor="enabled">enabled</label></PropName></th>
                      <td><CheckLabel><Check id="enabled" type="checkbox" checked={enabled} onChange={() => setEnabled(!enabled)} /></CheckLabel></td>
                    </PropRow>
                    <PropRow $tone={cream} $bold><th><PropName><ChevronSlot><Chevron dim /></ChevronSlot>geometry</PropName></th><td>[(0, 0), 800 x 600]</td></PropRow>
                    <PropRow $tone={lemon}><th><PropName><ChevronSlot><Chevron dim /></ChevronSlot>sizePolicy</PropName></th><td>[Preferred, Preferred, 0, 0]</td></PropRow>
                    <PropRow $tone={cream}><th><PropName><ChevronSlot><Chevron dim /></ChevronSlot>minimumSize</PropName></th><td>0 x 0</td></PropRow>
                  </tbody>
                </Table>
              </TableClip>
              <Track><Thumb $from={21} $to={50} /></Track>
            </TableFrame>
          </Dock>

          <Dock>
            <DockHeader title="리소스 탐색기" />
            <ResourceTools>
              <ResourceButton aria-label="Edit resources"><PencilIcon /></ResourceButton>
              <ResourceButton aria-label="Reload"><ReloadIcon /></ResourceButton>
              <ResourceFilter placeholder="필터" aria-label="리소스 필터" />
            </ResourceTools>
            <Panes>
              <Pane>&lt;resource root&gt;</Pane>
              <Pane $soft />
            </Panes>
            <Tabs role="tablist">
              <Tab role="tab">시그널/슬롯 편집기</Tab>
              <Tab role="tab">동작 편집기</Tab>
              <Tab role="tab" $current aria-selected>리소스 탐색기</Tab>
            </Tabs>
          </Dock>
        </RightColumn>
      </Work>
      <StatusBar />
    </Window>
  );
}
